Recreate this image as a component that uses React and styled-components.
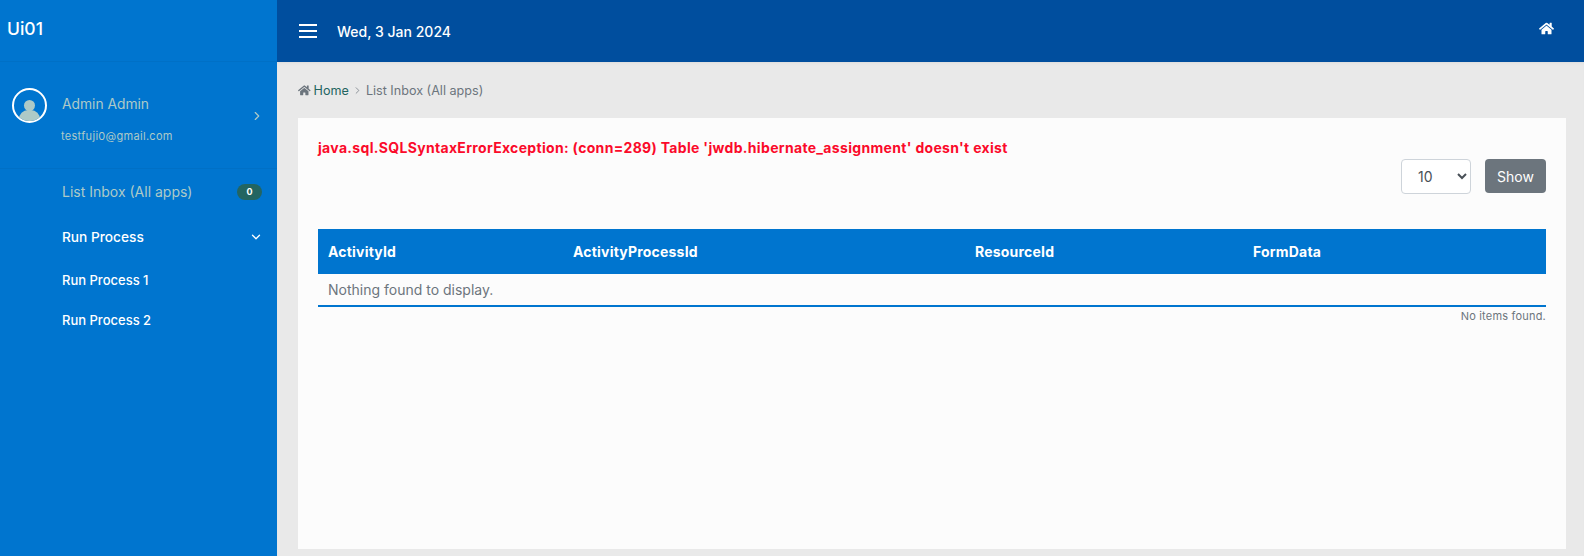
import React from "react";
import styled, { createGlobalStyle } from "styled-components";
import { FaHome } from "react-icons/fa";
import { ChevronRight, ChevronDown } from "lucide-react";

const GlobalStyle = createGlobalStyle`
  html, body {
    margin: 0;
    padding: 0;
    height: 100%;
    overflow: hidden;
    font-family: Inter, "Liberation Sans", sans-serif;
    -webkit-font-smoothing: antialiased;
  }
`;

const App = () => {
  return (
    <Page>
      <GlobalStyle />
      <Sidebar>
        <Brand>Ui01</Brand>
        <Profile>
          <ProfileTop>
            <Avatar>
              <AvatarHead />
              <AvatarBody />
            </Avatar>
            <UserName>Admin Admin</UserName>
          </ProfileTop>
          <UserMail>testfuji0@gmail.com</UserMail>
          <ProfileArrow>
            <ChevronRight size={14} strokeWidth={2} />
          </ProfileArrow>
        </Profile>
        <Menu>
          <MenuItem $muted>
            List Inbox (All apps)
            <Badge>0</Badge>
          </MenuItem>
          <MenuItem>
            Run Process
            <MenuArrow>
              <ChevronDown size={14} strokeWidth={2.2} />
            </MenuArrow>
          </MenuItem>
          <SubItem>Run Process 1</SubItem>
          <SubItem>Run Process 2</SubItem>
        </Menu>
      </Sidebar>
      <Main>
        <Header>
          <Burger>
            <span />
            <span />
            <span />
          </Burger>
          <DateText>Wed, 3 Jan 2024</DateText>
          <HomeLink>
            <FaHome />
          </HomeLink>
        </Header>
        <Content>
          <Breadcrumb>
            <FaHome />
            <CrumbLink>Home</CrumbLink>
            <ChevronRight size={11} strokeWidth={1.6} />
            <span>List Inbox (All apps)</span>
          </Breadcrumb>
          <Card>
            <ErrorText>
              java.sql.SQLSyntaxErrorException: (conn=289) Table
              'jwdb.hibernate_assignment' doesn't exist
            </ErrorText>
            <Filter>
              <PageSize defaultValue="10">
                <option>10</option>
                <option>20</option>
                <option>50</option>
              </PageSize>
              <ShowButton>Show</ShowButton>
            </Filter>
            <Table>
              <colgroup>
                <col width="245" />
                <col width="402" />
                <col width="278" />
                <col width="303" />
              </colgroup>
              <thead>
                <tr>
                  <Th>ActivityId</Th>
                  <Th>ActivityProcessId</Th>
                  <Th>ResourceId</Th>
                  <Th>FormData</Th>
                </tr>
              </thead>
              <tbody>
                <tr>
                  <Td colSpan={4}>Nothing found to display.</Td>
                </tr>
              </tbody>
            </Table>
            <Banner>No items found.</Banner>
          </Card>
        </Content>
      </Main>
    </Page>
  );
};

export default App;

const Page = styled.div`
  display: flex;
  width: 1584px;
  height: 556px;
  overflow: hidden;
`;

const Sidebar = styled.aside`
  width: 277px;
  flex-shrink: 0;
  background: #0075cf;
  color: #fff;
`;

const Brand = styled.div`
  height: 62px;
  box-sizing: border-box;
  padding: 18px 0 0 7px;
  font-size: 17.5px;
  line-height: 21px;
  font-weight: 500;
  border-bottom: 1px solid #0070c6;
`;

const Profile = styled.div`
  position: relative;
  height: 107px;
  box-sizing: border-box;
  padding: 26px 0 0 12px;
  border-bottom: 1px solid #0070c6;
`;

const ProfileTop = styled.div`
  display: flex;
  align-items: center;
  gap: 15px;
  height: 35px;
`;

const Avatar = styled.div`
  position: relative;
  flex-shrink: 0;
  width: 35px;
  height: 35px;
  box-sizing: border-box;
  border: 2px solid #fff;
  border-radius: 50%;
  overflow: hidden;
`;

const AvatarHead = styled.div`
  position: absolute;
  top: 10px;
  left: 10px;
  width: 11px;
  height: 11px;
  border-radius: 50%;
  background: #aecac7;
`;

const AvatarBody = styled.div`
  position: absolute;
  top: 20px;
  left: 5px;
  width: 21px;
  height: 16px;
  border-radius: 9px 9px 0 0;
  background: #aecac7;
`;

const UserName = styled.div`
  margin-top: -3px;
  font-size: 13.8px;
  line-height: 16px;
  color: #aecac7;
`;

const UserMail = styled.div`
  margin: 6px 0 0 49px;
  font-size: 11px;
  line-height: 14px;
  letter-spacing: 0.3px;
  color: #aecac7;
`;

const ProfileArrow = styled.div`
  position: absolute;
  top: 47px;
  right: 13px;
  display: flex;
  color: #aecac7;
`;

const Menu = styled.nav`
  display: flex;
  flex-direction: column;
`;

const MenuItem = styled.div`
  display: flex;
  align-items: center;
  justify-content: space-between;
  height: 45px;
  padding: 0 15px 0 62px;
  font-size: ${(p) => (p.$muted ? "14px" : "13.7px")};
  font-weight: ${(p) => (p.$muted ? 400 : 500)};
  color: ${(p) => (p.$muted ? "#aecac7" : "#fff")};
`;

const SubItem = styled.div`
  display: flex;
  align-items: center;
  height: 40px;
  padding-left: 62px;
  position: relative;
  top: 1px;
  font-size: 13px;
  font-weight: 500;
`;

const Badge = styled.span`
  width: 25px;
  height: 16px;
  border-radius: 8px;
  background: #236561;
  color: #fff;
  font-size: 9px;
  font-weight: 700;
  line-height: 16px;
  text-align: center;
`;

const MenuArrow = styled.span`
  display: flex;
  margin-right: -1px;
`;

const Main = styled.main`
  flex: 1;
  display: flex;
  flex-direction: column;
  min-width: 0;
`;

const Header = styled.header`
  height: 62px;
  flex-shrink: 0;
  display: flex;
  align-items: center;
  padding: 0 30px 0 22px;
  background: #004e9e;
  color: #fff;
`;

const Burger = styled.div`
  display: flex;
  flex-direction: column;
  gap: 4px;
  width: 18px;
  margin-right: 20px;
  span {
    height: 2px;
    background: #fff;
  }
`;

const DateText = styled.div`
  font-size: 14px;
  font-weight: 500;
`;

const HomeLink = styled.div`
  margin: -6px 0 0 auto;
  display: flex;
  font-size: 15px;
`;

const Content = styled.div`
  flex: 1;
  display: flex;
  flex-direction: column;
  padding: 0 18px 7px 21px;
  background: #e9e9e9;
  box-shadow: inset 0 3px 3px -2px #dcdcdc;
`;

const Breadcrumb = styled.div`
  height: 56px;
  flex-shrink: 0;
  display: flex;
  align-items: center;
  gap: 3px;
  font-size: 12.6px;
  color: #6c757d;
`;

const CrumbLink = styled.span`
  color: #236561;
`;

const Card = styled.section`
  flex: 1;
  box-sizing: border-box;
  padding: 21px 20px 0;
  background: #fcfcfc;
`;

const ErrorText = styled.div`
  font-size: 14px;
  line-height: 18px;
  font-weight: 700;
  letter-spacing: 0.32px;
  color: #fb0a2a;
`;

const Filter = styled.div`
  display: flex;
  justify-content: flex-end;
  gap: 14px;
  margin-top: 2px;
`;

const PageSize = styled.select`
  width: 70px;
  height: 35px;
  box-sizing: border-box;
  padding: 0 0 0 12px;
  border: 1px solid #ced4da;
  border-radius: 4px;
  background: #fff;
  color: #495057;
  font-family: inherit;
  font-size: 14px;
`;

const ShowButton = styled.button`
  width: 61px;
  height: 34px;
  padding: 0;
  border: none;
  border-radius: 4px;
  background: #6c757d;
  color: #fff;
  font-family: inherit;
  font-size: 14px;
`;

const Table = styled.table`
  width: 100%;
  table-layout: fixed;
  border-collapse: collapse;
  margin-top: 35px;
`;

const Th = styled.th`
  height: 45px;
  padding: 0 10px;
  background: #0075cf;
  color: #fff;
  font-size: 14px;
  font-weight: 700;
  letter-spacing: 0.2px;
  text-align: left;
`;

const Td = styled.td`
  height: 31px;
  padding: 0 10px;
  border-bottom: 2px solid #0075cf;
  color: #6c757d;
  font-size: 14px;
`;

const Banner = styled.div`
  margin-top: 2px;
  font-size: 11px;
  line-height: 14px;
  letter-spacing: 0.2px;
  color: #6c757d;
  text-align: right;
`;
